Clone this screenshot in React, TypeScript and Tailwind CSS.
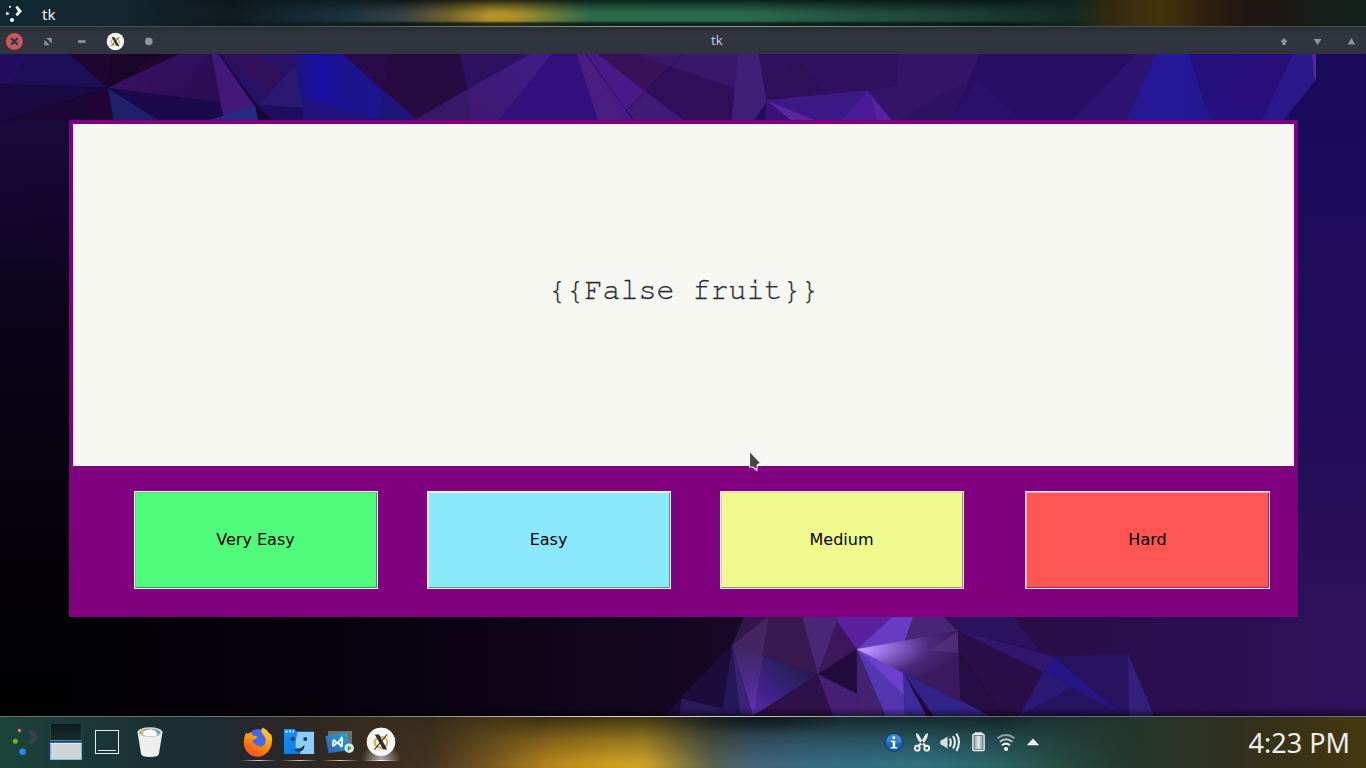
import React from "react";

type Facet = [points: string, fill: string];

const upperFacets: Facet[] = [
  ["0,54 70,54 108,88 0,84", "#1c0e56"],
  ["0,54 25,54 10,84 0,84", "#220d60"],
  ["70,54 180,54 108,88", "#20062f"],
  ["112,54 160,54 108,88", "#1a0627"],
  ["180,54 212,54 222,103 108,88", "url(#plum)"],
  ["0,84 108,88 0,122", "#180942"],
  ["0,122 108,88 114,120", "#1b0735"],
  ["82,98 108,88 106,120 90,120", "#220434"],
  ["108,88 114,120 158,120", "#20206a"],
  ["108,88 222,103 224,120 158,120", "#1a0a4c"],
  ["219,54 296,54 304,108 258,106", "#281066"],
  ["219,54 252,54 297,84 285,82 270,90", "#2f0f58"],
  ["212,54 219,54 255,106 224,120", "#42187a"],
  ["219,54 228,66 259,108 272,120 256,120 255,106", "#15072f"],
  ["255,106 210,120 258,120", "#262a80"],
  ["260,104 295,66 304,108", "#2a1970"],
  ["258,106 304,108 304,120 272,120", "#1d0d5c"],
  ["295,54 345,54 418,120 304,120", "url(#blueBand)"],
  ["304,120 302,98 380,120", "#21127c"],
  ["343,54 460,54 467,90 418,120", "#260a40"],
  ["343,54 392,54 385,92", "#2a0948"],
  ["385,92 418,120 380,120", "#1c1476"],
  ["460,54 530,54 467,90", "#2c1160"],
  ["530,54 552,54 500,120 415,120", "url(#violet)"],
  ["467,90 415,120 469,120", "#371866"],
  ["552,54 577,54 598,120 500,120", "#33107b"],
  ["577,54 586,54 633,120 598,120", "#4a1e80"],
  ["586,54 598,54 684,120 625,120", "#4a1988"],
  ["598,54 683,54 645,91", "#371259"],
  ["645,91 625,112 633,120 684,120", "#401a76"],
  ["645,91 683,54 735,88 732,120 684,120", "#300f58"],
  ["638,54 738,54 735,88 674,68", "#3c166a"],
  ["738,54 759,54 767,101 754,120 732,120", "#402076"],
  ["759,54 898,54 896,88 868,91 767,101", "#31105f"],
  ["767,80 802,62 820,90 767,101", "#2e1058"],
  ["767,101 868,91 841,120 765,120", "#3c1886"],
  ["767,101 814,120 790,120", "#5a259f"],
  ["767,101 790,120 765,120", "#381176"],
  ["868,91 892,120 841,120", "#4a1a97"],
  ["871,94 892,120 877,120", "#5822a2"],
  ["898,54 980,54 977,79 900,120 892,120 868,91 896,86", "#341467"],
  ["938,96 977,79 952,120 900,120", "#301263"],
  ["980,54 1136,54 1072,120 952,120", "#290e66"],
  ["977,79 952,120 1022,120", "#29106b"],
  ["1136,54 1162,54 1130,120 1072,120", "#2d1372"],
  ["1156,54 1190,54 1211,120 1128,120", "url(#cobalt)"],
  ["1190,54 1293,54 1262,120 1211,120", "url(#indigo)"],
  ["1205,105 1250,66 1225,54 1190,54", "#25117c"],
  ["1293,54 1316,54 1316,80 1283,120 1262,120", "#2b188a"],
  ["1316,54 1366,54 1366,122 1283,122 1316,80", "#1a0b5b"],
];

const lowerFacets: Facet[] = [
  ["732,647 680,702 720,720 740,720", "#1c0c3c"],
  ["745,616 769,616 732,647", "#32164c"],
  ["769,616 732,647 763,659", "#452560"],
  ["769,616 802,616 818,677 763,659", "#381a50"],
  ["802,616 840,616 818,677", "#4a2676"],
  ["837,622 818,677 857,651", "#3e165c"],
  ["840,616 894,616 857,651 837,622", "#5a209e"],
  ["763,659 818,677 753,720", "url(#deepViolet)"],
  ["732,647 763,659 753,720", "url(#shard)"],
  ["732,647 753,720 740,720", "#3b2274"],
  ["732,647 740,720 722,720", "#231958"],
  ["818,677 753,720 833,720", "#2d1148"],
  ["818,677 857,651 857,697", "#210a3c"],
  ["818,677 857,697 857,720 833,720", "#452074"],
  ["857,697 857,720 898,720", "#44216e"],
  ["857,651 857,697 886,720", "#43226f"],
  ["894,616 914,616 905,642 857,651", "#683bc4"],
  ["914,616 943,616 958,632 905,642", "#482676"],
  ["943,616 950,616 958,632", "#3a1870"],
  ["857,651 903,675 905,720 886,720", "#5536b2"],
  ["857,651 903,675 926,720", "#6a40cc"],
  ["903,675 960,693 990,720 934,720", "#31238a"],
  ["903,675 905,720 926,720", "#3e2a98"],
  ["903,675 960,690 960,705", "#361a62"],
  ["857,651 958,632 960,704 903,675", "url(#glint)"],
  ["943,616 1012,616 1040,653 1005,644 958,632", "#2b145e"],
  ["958,632 1053,658 1045,676", "#32166e"],
  ["958,632 1045,676 1019,720 1004,720 960,654", "#2b0e49"],
  ["960,654 960,703 990,720 1004,720", "#260d42"],
  ["1053,658 1128,656 1129,720 1019,720", "#261360"],
  ["1053,658 1019,720 1072,690", "#2a1a76"],
  ["1053,658 1118,716 1072,690 1045,675", "#281584"],
  ["1128,656 1129,720 1154,720", "#33207c"],
  ["681,702 679,720 753,720", "#2a1a58"],
  ["681,702 664,720 679,720", "#1b0e3a"],
];

function Wallpaper() {
  return (
    <svg className="absolute inset-0 h-full w-full" viewBox="0 54 1366 662" preserveAspectRatio="none">
      <defs>
        <linearGradient id="sky" x1="0" x2="1" y1="0" y2="0">
          <stop offset="0" stopColor="#010102" />
          <stop offset=".25" stopColor="#06020c" />
          <stop offset=".5" stopColor="#150722" />
          <stop offset=".75" stopColor="#290d48" />
          <stop offset="1" stopColor="#2e1059" />
        </linearGradient>
        <linearGradient id="topBase" x1="0" x2="1" y1="0" y2="0">
          <stop offset="0" stopColor="#190942" />
          <stop offset="1" stopColor="#2a0e66" />
        </linearGradient>
        <linearGradient id="leftEdge" x1="0" x2="0" y1="0" y2="1">
          <stop offset="0" stopColor="#190a40" />
          <stop offset=".3" stopColor="#0c041c" />
          <stop offset=".75" stopColor="#030106" />
          <stop offset="1" stopColor="#010102" />
        </linearGradient>
        <linearGradient id="leftFacet" x1="0" x2="0" y1="0" y2="1">
          <stop offset="0" stopColor="#180a3c" />
          <stop offset="1" stopColor="#0e0420" />
        </linearGradient>
        <linearGradient id="rightEdge" x1="0" x2="0" y1="0" y2="1">
          <stop offset="0" stopColor="#190a5c" />
          <stop offset=".55" stopColor="#220d58" />
          <stop offset="1" stopColor="#2d1058" />
        </linearGradient>
        <linearGradient id="plum" x1="0" x2="1" y1="0" y2=".3">
          <stop offset="0" stopColor="#3f1268" />
          <stop offset="1" stopColor="#2c0c52" />
        </linearGradient>
        <linearGradient id="blueBand" x1="0" x2="1" y1="0" y2="0">
          <stop offset="0" stopColor="#20127c" />
          <stop offset=".2" stopColor="#1810a4" />
          <stop offset=".4" stopColor="#1c1290" />
          <stop offset="1" stopColor="#211784" />
        </linearGradient>
        <linearGradient id="violet" x1="1" x2="0" y1="0" y2="1">
          <stop offset="0" stopColor="#401c8a" />
          <stop offset="1" stopColor="#3c1768" />
        </linearGradient>
        <linearGradient id="cobalt" x1="0" x2="1" y1="0" y2="0">
          <stop offset="0" stopColor="#271894" />
          <stop offset=".6" stopColor="#24199a" />
          <stop offset="1" stopColor="#25158a" />
        </linearGradient>
        <linearGradient id="indigo" x1="0" x2="1" y1="0" y2="0">
          <stop offset="0" stopColor="#251282" />
          <stop offset="1" stopColor="#280e78" />
        </linearGradient>
        <linearGradient id="deepViolet" x1="1" x2="0" y1="0" y2="1">
          <stop offset="0" stopColor="#201844" />
          <stop offset=".35" stopColor="#2c2062" />
          <stop offset=".7" stopColor="#42218a" />
          <stop offset="1" stopColor="#5a2cae" />
        </linearGradient>
        <linearGradient id="shard" x1="0" x2="0" y1="0" y2="1">
          <stop offset="0" stopColor="#402666" />
          <stop offset=".5" stopColor="#4c2c8c" />
          <stop offset="1" stopColor="#6534b8" />
        </linearGradient>
        <radialGradient id="glint" gradientUnits="userSpaceOnUse" cx="857" cy="651" r="104" gradientTransform="rotate(-4 857 651) translate(0 390.6) scale(1 .4)">
          <stop offset="0" stopColor="#cda8ff" />
          <stop offset=".2" stopColor="#a580ee" />
          <stop offset=".45" stopColor="#7b55bc" />
          <stop offset=".7" stopColor="#4c2a7c" />
          <stop offset="1" stopColor="#3b1a62" />
        </radialGradient>
        <linearGradient id="bottomShade" x1="0" x2="0" y1="0" y2="1">
          <stop offset="0" stopColor="#000" stopOpacity="0" />
          <stop offset="1" stopColor="#000" stopOpacity=".45" />
        </linearGradient>
      </defs>
      <rect x="0" y="54" width="1366" height="662" fill="url(#sky)" />
      <rect x="0" y="54" width="1366" height="68" fill="url(#topBase)" />
      <rect x="0" y="118" width="72" height="598" fill="url(#leftEdge)" />
      <path d="M0 164L69 275V120L0 130Z" fill="url(#leftFacet)" />
      <rect x="1290" y="118" width="76" height="502" fill="url(#rightEdge)" />
      {upperFacets.map(([points, fill]) => (
        <polygon key={points} points={points} fill={fill} stroke={fill} strokeWidth=".5" />
      ))}
      <path d="M1312 54H1316V82L1314 76Z" fill="#5920ac" />
      <path d="M586 54L633 120M683 54L625 112" stroke="#2a0b4c" strokeWidth=".7" fill="none" />
      <path d="M767 101L868 91" stroke="#4c1a90" strokeWidth="1" />
      <g transform="translate(0 19.2) scale(1 .968)">
        {lowerFacets.map(([points, fill]) => (
          <polygon key={points} points={points} fill={fill} stroke={fill} strokeWidth=".4" />
        ))}
        <path d="M958 632L930 652L958 654.500Z" fill="#5a3a86" opacity=".55" />
      </g>
      <rect x="0" y="708" width="1366" height="8" fill="url(#bottomShade)" />
    </svg>
  );
}

function XLogo() {
  return (
    <>
      <circle cx="15" cy="15" r="14.3" fill="#e4e4e4" />
      <circle cx="15" cy="14.6" r="13.8" fill="#f6f6f6" />
      <ellipse cx="15" cy="15.3" rx="6.4" ry="5.4" fill="none" stroke="#f2aa26" strokeWidth="2" />
      <path d="M8.8 7.5H13L21.300 22.5H17.1Z" fill="#25343a" />
      <path d="M20.4 7.5H21.8L9.2 22.5H7.8Z" fill="#25343a" />
    </>
  );
}

function TopPanel() {
  return (
    <header className="relative flex h-[27px] shrink-0 items-center border-b border-[#454f4d] bg-[linear-gradient(90deg,#102832_0,#13252e_120px,#111b20_230px,#1c3442_350px,#3c4244_405px,#77662c_450px,#b8972a_490px,#ae942a_515px,#657c3c_555px,#2d6d4c_590px,#2c6e50_740px,#255343_850px,#1c3e34_980px,#142c27_1070px,#33290e_1110px,#45320c_1160px,#2f200f_1205px,#1d1511_1250px,#12201a_1366px)] font-['Noto_Sans',sans-serif]">
      <div className="absolute inset-0 bg-[linear-gradient(180deg,rgba(4,14,14,.8)_0,rgba(4,14,14,.4)_6px,rgba(4,14,14,.08)_12px,transparent_16px,rgba(4,14,14,.05)_21px,rgba(4,20,14,.75)_23px,rgba(4,16,12,.85)_26px)] [mask-image:linear-gradient(90deg,transparent_150px,#000_400px,#000_1000px,transparent_1110px)]" />
      <div className="absolute -bottom-px left-[300px] h-px w-[800px] bg-[linear-gradient(90deg,transparent,#8f9c90_40%,#8b978d_60%,transparent)]" />
      <svg className="relative ml-1 h-6 w-6" viewBox="4 1 24 24" fill="#f2f4f4">
        <circle cx="10" cy="6.8" r="1.1" />
        <circle cx="7.3" cy="13.5" r="1.5" />
        <circle cx="12" cy="20" r="2.1" />
        <path d="M15.4 7.2L17.4 5.8L22 11.2L17.4 16.3L15.4 14.6L18 11.2Z" />
      </svg>
      <span className="relative ml-[14px] pt-[2px] text-[15px] leading-5 text-[#f3f5f5]">tk</span>
    </header>
  );
}

function TitleBar() {
  return (
    <div className="flex h-[27px] shrink-0 items-center bg-[linear-gradient(180deg,#272d33_0,#30353f_7px,#30343f_100%)] pr-2">
      <svg className="h-[27px] w-[160px]" viewBox="0 27 160 27">
        <circle cx="14.4" cy="41.4" r="8.5" fill="#cc575d" />
        <path d="M11.2 38.2L17.6 44.6M17.6 38.2L11.2 44.6" stroke="#2f343f" strokeWidth="2.3" />
        <path d="M46.3 38H51.8V43.5ZM44.3 39.8L49.8 45.2H44.3Z" fill="#90939b" />
        <rect x="78" y="40.2" width="7.5" height="2.6" fill="#90939b" />
        <g transform="translate(106.3 32.4) scale(.607)">
          <XLogo />
        </g>
        <circle cx="148.8" cy="41.4" r="3.8" fill="#90939b" />
      </svg>
      <span className="ml-[551px] pb-[2px] font-['Noto_Sans',sans-serif] text-[13px] leading-5 text-[#c3c7d1]">tk</span>
      <svg className="ml-auto h-[27px] w-[84px]" viewBox="1274 27 84 27" fill="#90939b">
        <path d="M1284 38L1287.8 42H1285.8V45H1282.3V42H1280.3Z" />
        <path d="M1313.8 39H1321.4L1317.6 45Z" />
        <path d="M1351.4 38L1355.2 44.4H1347.6Z" />
      </svg>
    </div>
  );
}

const answers = [
  {
    label: "Very Easy",
    place: "w-[244px]",
    look: "pr-px bg-[#50fa7b] border-t-[#49dc70] border-l-[#49dc70] border-r-[#309a4b] border-b-[#309a4b]",
  },
  {
    label: "Easy",
    place: "ml-[49px] w-[244px]",
    look: "pr-px bg-[#8be9fd] border-t-[#cafaff] border-l-[#cafaff] border-r-[#548d99] border-b-[#548d99]",
  },
  {
    label: "Medium",
    place: "ml-[49px] w-[244px]",
    look: "pr-px bg-[#f1fa8c] border-t-[#d7df80] border-l-[#d7df80] border-r-[#929754] border-b-[#929754]",
  },
  {
    label: "Hard",
    place: "ml-[61px] w-[245px]",
    look: "bg-[#ff5555] border-t-[#ffabab] border-l-[#ffabab] border-r-[#9b3434] border-b-[#9b3434]",
  },
];

function FlashCard() {
  return (
    <main className="relative ml-[69px] mt-[66px] h-[497px] w-[1229px] bg-[#800080] p-1">
      <section className="flex h-[342px] items-center justify-center bg-[#f8f8f2] pb-[11px]">
        <p className="whitespace-pre font-['Courier_10_Pitch','Nimbus_Mono_PS','FreeMono','Liberation_Mono',monospace] text-[30px] leading-none text-[#282a36] [-webkit-text-stroke:0.25px_#282a36]">{"{{False fruit}}"}</p>
      </section>
      <div className="flex pl-[61px] pt-[25px]">
        {answers.map((answer) => (
          <div key={answer.label} className={`h-[98px] bg-[#f3edf3] p-px ${answer.place}`}>
            <button
              className={`flex h-full w-full items-center justify-center border pb-px font-['DejaVu_Sans',sans-serif] text-base leading-none text-black ${answer.look}`}
            >
              {answer.label}
            </button>
          </div>
        ))}
      </div>
      <svg className="absolute left-[679px] top-[329px] h-[24px] w-[16px]" viewBox="748 449 16 24">
        <path d="M749.5 451.2L760.7 463L757.4 464.8L756.8 470.5L753 467H749.5Z" fill="#444746" stroke="#f4f4f4" strokeWidth="1.1" />
      </svg>
    </main>
  );
}

function Launcher() {
  return (
    <svg className="ml-2 h-[51px] w-[36px]" viewBox="8 717 36 51">
      <circle cx="19.4" cy="730.5" r="1.7" fill="#ee7c58" />
      <circle cx="15.3" cy="741.2" r="2.5" fill="#61bd0c" />
      <circle cx="22.6" cy="751.8" r="3.3" fill="#218bf1" />
      <path d="M27.5 731.7L30.6 728.8L38.7 737.3L31 745.8L27.5 742.5L32.5 737.4Z" fill="#3c4147" />
    </svg>
  );
}

function Pager() {
  return (
    <div className="ml-1.5 mt-[7px] flex h-9 w-8 flex-col gap-[2px]">
      <div className="h-[17px] border border-t-0 border-[#25403f] border-b-[#6b7f7e] bg-[linear-gradient(180deg,#0b1c1e,#142c2f)]" />
      <div className="h-[17px] border border-[#8d9eee] border-b-[#89b8ed] border-t-[#dfe8f4] bg-[#cfd4d5] shadow-[0_-1px_1px_#1871c9]" />
    </div>
  );
}

function Trash() {
  return (
    <svg className="ml-[16px] h-[51px] w-[30px]" viewBox="135 717 30 51">
      <path d="M137.5 732L141 753.5Q141.4 757 150 757Q158.600 757 159 753.5L162.500 732Z" fill="#eeeeed" />
      <ellipse cx="150" cy="732.2" rx="12.5" ry="5" fill="#d5d5d5" />
      <ellipse cx="150" cy="732.5" rx="10.500" ry="3.8" fill="#a2a5a4" />
      <path d="M141 732L143 730L147 734L143 735Z" fill="#e8c744" />
      <path d="M155 731L159.500 732L158 735L154 736Z" fill="#22a6a7" />
      <path d="M143 734.6L144 731L148 730L151 729.3L155 731L158 734L155.500 736L146 736Z" fill="#fff" />
    </svg>
  );
}

function Tasks() {
  return (
    <svg className="ml-[73px] h-[51px] w-[164px]" viewBox="238 717 164 51">
      <defs>
        <linearGradient id="fox" x1=".8" y1="0" x2=".3" y2="1">
          <stop offset="0" stopColor="#ffd52b" />
          <stop offset=".5" stopColor="#ff950d" />
          <stop offset="1" stopColor="#ff4c19" />
        </linearGradient>
        <linearGradient id="face" x1="0" y1="0" x2="1" y2="1">
          <stop offset="0" stopColor="#1597fb" />
          <stop offset="1" stopColor="#1168d5" />
        </linearGradient>
        <linearGradient id="code" x1="1" y1="0" x2="0" y2="1">
          <stop offset="0" stopColor="#2aabc5" />
          <stop offset="1" stopColor="#2660b8" />
        </linearGradient>
        <linearGradient id="underline" x1="0" x2="1">
          <stop offset="0" stopColor="#fff" stopOpacity="0" />
          <stop offset=".5" stopColor="#fff" />
          <stop offset="1" stopColor="#fff" stopOpacity="0" />
        </linearGradient>
        <radialGradient id="glow" cx=".5" cy="1" r=".5" gradientTransform="translate(0 -.6) scale(1 1.6)">
          <stop offset="0" stopColor="#fff" stopOpacity=".6" />
          <stop offset="1" stopColor="#fff" stopOpacity="0" />
        </radialGradient>
      </defs>
      <rect x="361" y="738" width="40" height="22" fill="url(#glow)" />
      <circle cx="258.800" cy="740.500" r="11.500" fill="#4866e8" />
      <path d="M246 732.500L247.500 733.800L249 733.300L251 732Q251.300 734 253 735.500L257.500 736.500L255.500 739L252 740.500L254 743.500Q258 748.500 263 746Q267.500 742 264.500 736.500L261 731.500L262.500 727.500Q267 729.500 269 733L271.500 735Q273.500 744 269 750.500Q264 757 257 756.800Q248 756 244.600 747.500Q242.500 740 246 732.500Z" fill="url(#fox)" />
      <path d="M250 741L255 745L260 746Q258 750 252.500 748Z" fill="#ff7a16" />
      <path d="M284 729H294.500L296.500 731.500H314V754H284Z" fill="url(#face)" />
      <path d="M297.500 732H314V754H300.500L299.500 748H295.500Q295.500 739 297.500 732Z" fill="#8cceff" />
      <path d="M285.500 731.500H287.500M289 731.500H291M292.500 731.500H294" stroke="#dbf4ff" strokeWidth="2" />
      <circle cx="292.700" cy="739" r="2" fill="#1d3950" />
      <circle cx="305.300" cy="739" r="2" fill="#1d3950" />
      <path d="M294 749.500Q300 749.500 304.500 745Q304.500 751 299.500 751.800Q296 751.800 294 749.500Z" fill="#1d3950" />
      <rect x="328" y="731" width="24" height="20" fill="#687372" />
      <path d="M325.500 736L347 732.700L350 750L328.500 753.200Z" fill="url(#code)" />
      <path d="M332.500 740L334 739L337.500 742L341.500 736.500L343 737.500V746.500L341 747.500L337.500 743.700L333.500 747L332 746ZM334 741.500V744L335.500 743ZM341 740V744.500L339.500 742.500Z" fill="#f5faff" fillRule="evenodd" />
      <circle cx="349.200" cy="748.200" r="4.800" fill="#dde4e4" />
      <path d="M347.700 745.700L351.800 748.200L347.700 750.700Z" fill="#20a77a" />
      <g transform="translate(366 727)">
        <XLogo />
      </g>
      <rect x="240" y="760" width="37" height="1" fill="url(#underline)" opacity=".75" />
      <rect x="281" y="760" width="37" height="1" fill="url(#underline)" opacity=".75" />
      <rect x="322" y="760" width="37" height="1" fill="url(#underline)" opacity=".75" />
      <rect x="362" y="760" width="38" height="1" fill="url(#underline)" />
    </svg>
  );
}

function Tray() {
  return (
    <svg className="ml-[480px] h-[51px] w-[162px]" viewBox="882 717 162 51">
      <defs>
        <linearGradient id="info" x1="0" x2="0" y1="0" y2="1">
          <stop offset="0" stopColor="#2b82d5" />
          <stop offset="1" stopColor="#0757ad" />
        </linearGradient>
        <linearGradient id="metal" x1="0" x2="1">
          <stop offset="0" stopColor="#a3adac" />
          <stop offset=".5" stopColor="#e0e5e4" />
          <stop offset="1" stopColor="#9aa8a8" />
        </linearGradient>
      </defs>
      <circle cx="894" cy="742.500" r="9" fill="url(#info)" stroke="#103c68" strokeWidth="1" />
      <path d="M886.500 742A7.500 7.500 0 0 1 901.500 742Q898 744 894 742.500" fill="#64a3de" opacity=".4" />
      <circle cx="893.800" cy="737.700" r="1.400" fill="#fff" />
      <path d="M891 740.700H895.200V747H897.200V748.500H890.600V747H892.700V742.200H891Z" fill="#fff" />
      <g fill="none" stroke="#f0f2f1" strokeWidth="1.900">
        <circle cx="917.300" cy="748.200" r="2.400" />
        <circle cx="926.700" cy="748.200" r="2.400" />
      </g>
      <path d="M916 733L918.200 734L922.800 741.500L926 745L924.500 746.500L920.500 743Q916 738.500 916 733ZM928 733L925.800 734L921.200 741.500L918 745L919.500 746.500L923.500 743Q928 738.500 928 733Z" fill="#eef1f0" />
      <path d="M940.300 742.500Q940.300 739.500 943 739.500L947.500 736.500V748.500L943 745.500Q940.300 745.500 940.300 742.500Z" fill="#d9dfdd" />
      <path d="M949.700 738.500Q952 742 949.700 746.500M953 736Q956.800 742 953 748.500M956.400 733.500Q961.500 742 956.400 751" fill="none" stroke="#eef1f0" strokeWidth="2" />
      <path d="M975.500 734V733H981.500V734" stroke="#edf0ef" strokeWidth="1.500" fill="none" />
      <rect x="972.900" y="734.300" width="11.200" height="16.300" rx="1" fill="#5d7270" stroke="#f0f2f1" strokeWidth="1.400" />
      <rect x="974.600" y="735.800" width="7.800" height="13.400" fill="url(#metal)" />
      <g fill="none" strokeWidth="2">
        <path d="M997.500 738.300Q1006 731.800 1014.500 738.300" stroke="#93a1a0" />
        <path d="M999.800 741.800Q1006 736.800 1012.200 741.800" stroke="#c0cac9" />
        <path d="M1002 745.200Q1006 742 1010 745.200" stroke="#eef1f0" />
      </g>
      <circle cx="1006" cy="749" r="2" fill="#fff" />
      <path d="M1033 738.500L1039.200 745.200H1026.800Z" fill="#f4f6f5" />
    </svg>
  );
}

function Taskbar() {
  return (
    <footer className="relative flex h-[52px] shrink-0 items-start border-t border-[#687370] bg-[linear-gradient(90deg,#1c4439_0,#1a3837_80px,#1c2b32_210px,#28272a_270px,#33291f_340px,#43331f_430px,#76581e_490px,#b5841c_550px,#cb9c1e_610px,#c9a026_645px,#8d7b38_680px,#57604f_712px,#41647a_755px,#376b82_820px,#30707e_920px,#2c6468_990px,#26483f_1070px,#24362c_1130px,#302f1f_1240px,#46380e_1366px)]">
      <div className="absolute inset-0 bg-[linear-gradient(180deg,rgba(12,16,16,.72)_0,rgba(12,16,16,.58)_8px,rgba(12,16,16,.3)_22px,transparent_46px)] [mask-image:linear-gradient(90deg,transparent_370px,#000_540px,#000_1000px,transparent_1140px)]" />
      <div className="absolute inset-0 bg-[radial-gradient(ellipse_90px_16px_at_760px_2px,rgba(10,18,20,.6),transparent)]" />
      <div className="absolute -top-px left-[350px] h-px w-[600px] bg-[linear-gradient(90deg,transparent,#e5dec4_45%,#d1cdbb_65%,transparent)]" />
      <div className="relative flex items-start">
        <Launcher />
        <Pager />
        <div className="ml-[13px] mt-[13px] flex h-6 w-6 flex-col justify-end border border-[#e8ebeb] px-[2px] pb-[2px]">
          <div className="h-px bg-[#e8ebeb]" />
        </div>
        <Trash />
        <Tasks />
        <Tray />
      </div>
      <time className="relative ml-auto mr-4 mt-[6px] whitespace-nowrap font-['Noto_Sans',sans-serif] text-[27px] leading-10 text-[#eceeed]">4:23 PM</time>
    </footer>
  );
}

export default function App() {
  return (
    <div className="flex h-[768px] w-[1366px] flex-col overflow-hidden bg-black">
      <TopPanel />
      <TitleBar />
      <div className="relative flex h-[662px] shrink-0 items-start overflow-hidden">
        <Wallpaper />
        <FlashCard />
      </div>
      <Taskbar />
    </div>
  );
}
